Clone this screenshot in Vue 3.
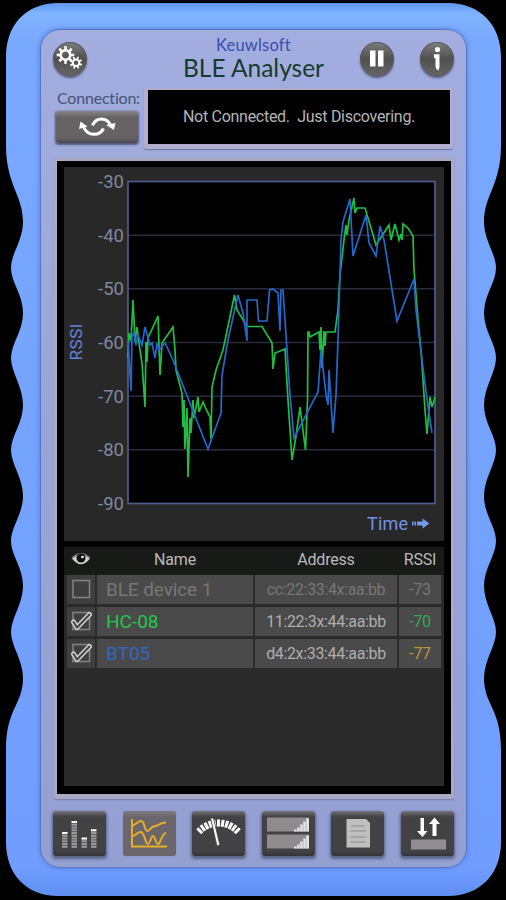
<script setup>
const ticks = [-30, -40, -50, -60, -70, -80, -90]
const tickY = (v) => 181.5 + ((-30 - v) * 322) / 60

const green = '128,358 129,333 131,341 133,300 135,342 137,327 139,343 140,350 142,363 145,407 146,342 147,362 148,338 158,316 160,375 161,360 162,343 173,327 175,350 176,370 182,393 183,427 184,400 185,449 187,408 188,477 190,418 191,433 193,400 194,418 198,397 199,412 203,402 206,409 210,417 211,439 212,387 216,370 223,350 234.5,295 237,310 247,326.5 262,326.5 272,343 273,369 275,353 285,349 288,400 292,460 296,436 300,407 305.5,450 307.5,400 308,332 309,332 310,337 319,332 320,350 321,327 322,368 324,331 325,346 326,332 335,332 338,310 340,275 344,240 346,225 347,235 349,220 354,198 355,213 357,208 365,208 371,228 376,245 389,225 391,240 395,224 399,240 401,234 402,240 403,224 408,228 413,236 414,270 415,282 418,320 421,350 425,410 427,434 430,397 432,407 435,397'
const blue = '128,341 131,391 132,336 134,333 136,345 138,335 142,345 145,327 150,345 152,343 155,358 157,343 159,350 165,343 173,360 208,449 221,413 222,375 228,340 238,295 243,313 247,341 247,300 257,300 258.5,321 267,321 269.5,290 273,289 278,293 280,331 281,290 283,290 286,335 290,395 294,438 318,392 321,350 326,395 328,405 329,370 333,433 336,395 338,340 341,240 343,222 350,199 353,256 366,215 369,243 376,256 380,226 384,240 397,321 414,279 416,310 422,360 428,407 432,433'

const devices = [
  { name: 'BLE device 1', address: 'cc:22:33:4x:aa:bb', rssi: -73, on: false, tone: 'off' },
  { name: 'HC-08', address: '11:22:3x:44:aa:bb', rssi: -70, on: true, tone: 'green' },
  { name: 'BT05', address: 'd4:2x:33:44:aa:bb', rssi: -77, on: true, tone: 'blue' },
]
const bars = [
  { x: 9, n: 6 },
  { x: 18.5, n: 10 },
  { x: 28.5, n: 4 },
  { x: 38, n: 7 },
]
const gaugeAngles = [-45, -36, -27, -18, -9, 0, 9, 18, 27, 36, 45]
const teeth = [0, 45, 90, 135, 180, 225, 270, 315]
</script>

<template>
  <main class="device">
    <svg class="shell" width="506" height="900" viewBox="0 0 506 900">
      <defs>
        <linearGradient id="body" x1="0" y1="0" x2="0" y2="1">
          <stop offset="0" stop-color="#5c96ee" />
          <stop offset=".012" stop-color="#7fb4ff" />
          <stop offset=".04" stop-color="#79a9ff" />
          <stop offset=".97" stop-color="#709dff" />
          <stop offset="1" stop-color="#5f8ff2" />
        </linearGradient>
      </defs>
      <path
        fill="url(#body)"
        d="M58 3H448C480 3 501 25 501 57V145C501 185 484 195 484 222C484 240 496 254 496 268C496 282 484 295 484 313C484 331 496 344 496 358C496 372 484 387 484 405C484 423 496 436 496 450C496 464 484 478 484 496C484 514 496 527 496 541C496 555 484 568 484 586C484 604 496 618 496 632C496 646 484 660 484 678C484 705 501 708 501 750V842C501 874 480 896 448 896H58C26 896 6 874 6 842V750C6 708 23 705 23 678C23 660 11 646 11 632C11 618 23 604 23 586C23 568 11 555 11 541C11 527 23 514 23 496C23 478 11 464 11 450C11 436 23 423 23 405C23 387 11 372 11 358C11 344 23 331 23 313C23 295 11 282 11 268C11 254 23 240 23 222C23 195 6 185 6 145V57C6 25 26 3 58 3Z"
      />
    </svg>

    <section class="face">
      <header class="top">
        <button class="round" aria-label="Settings">
          <svg width="34" height="34" viewBox="0 0 34 34">
            <g transform="translate(12.5 13)">
              <circle r="4.800" fill="none" stroke="#fff" stroke-width="2.600" />
              <rect v-for="a in teeth" :key="a" x="-1.300" y="-8.800" width="2.600" height="3.600" fill="#fff" :transform="`rotate(${a})`" />
            </g>
            <g transform="translate(23 20.7)">
              <circle r="3.300" fill="none" stroke="#fff" stroke-width="2" />
              <rect v-for="a in teeth" :key="a" x="-.9" y="-6.200" width="1.800" height="2.800" fill="#fff" :transform="`rotate(${a + 20})`" />
            </g>
          </svg>
        </button>
        <h1 class="title"><span class="brand">Keuwlsoft</span><span class="product">BLE Analyser</span></h1>
        <div class="top-right">
          <button class="round" aria-label="Pause">
            <svg width="34" height="34" viewBox="0 0 34 34"><path d="M10 8.500h5.500v16H10zM18 8.500h5.500v16H18z" fill="#fff" /></svg>
          </button>
          <button class="round" aria-label="Information">
            <svg width="34" height="34" viewBox="0 0 34 34">
              <circle cx="17.500" cy="7.500" r="2.600" fill="#fff" />
              <path d="M14 14.200h3.500v9.300q0 2.500 1.500 3" fill="none" stroke="#fff" stroke-width="4" />
            </svg>
          </button>
        </div>
      </header>

      <section class="status">
        <div class="connect">
          <span class="connect-label">Connection:</span>
          <button class="connect-button" aria-label="Connect">
            <svg width="40" height="24" viewBox="0 0 40 24" fill="none" stroke="#fff" stroke-width="3">
              <path d="M15.500 10.500C19 2 30 1.500 34 11" />
              <path d="M26.500 13.500C23 21 11 22 6.500 12" />
              <path d="M29 10l9.500-2-1.500 7zM2 14l1.500-7.500 7 5z" fill="#fff" stroke="none" />
            </svg>
          </button>
        </div>
        <div class="display">Not Connected.&nbsp; Just Discovering.</div>
      </section>

      <section class="screen">
        <svg class="chart" width="380" height="374" viewBox="64 167 380 374">
          <rect x="128" y="181.500" width="307" height="322" fill="#000" />
          <path v-for="t in ticks.slice(1, -1)" :key="t" :d="`M128 ${tickY(t)}H435`" stroke="#292b3e" stroke-width="1.500" />
          <rect x="128" y="181.500" width="307" height="322" fill="none" stroke="#4e5d8e" stroke-width="1.700" />
          <text v-for="t in ticks" :key="t" class="tick" x="124" :y="tickY(t) + 6.500" text-anchor="end">{{ t }}</text>
          <polyline :points="green" fill="none" stroke="#20bd43" stroke-width="1.700" />
          <polyline :points="blue" fill="none" stroke="#2468c9" stroke-width="1.700" />
          <text class="axis" transform="translate(82 342) rotate(-90)" text-anchor="middle" textLength="37">RSSI</text>
          <text class="axis time" x="367" y="529.500" textLength="41">Time</text>
          <path d="M412 521.500h1.500v4H412zM414.500 521.500h1.500v4h-1.500zM417 521.500h5.500v-3l7 5-7 5v-3H417z" fill="#7199ed" />
        </svg>

        <div class="table">
          <div class="row head">
            <span class="eye">
              <svg width="20" height="16" viewBox="0 0 20 16">
                <path d="M1 7.500Q10 0 19 7.500Q10 19 1 7.500Z" fill="#d0d0d0" />
                <path d="M1 7Q10-1.500 19 7" fill="none" stroke="#777" stroke-width="1.500" />
                <circle cx="10" cy="7" r="4.500" fill="#111" />
                <circle cx="11.500" cy="6" r="1.300" fill="#fff" />
              </svg>
            </span>
            <span>Name</span><span>Address</span><span>RSSI</span>
          </div>
          <div v-for="d in devices" :key="d.name" class="row entry" :class="d.tone">
            <span class="cell check">
              <svg width="22" height="22" viewBox="0 0 22 22" fill="none">
                <rect x="3" y="2.500" width="16.500" height="17" stroke="#858585" stroke-width="1.500" />
                <template v-if="d.on">
                  <path d="M3.500 12L7 17.500L19.500 4.500" stroke="#d2d2d2" stroke-width="5" stroke-linecap="round" stroke-linejoin="round" />
                  <path d="M3.500 12L7 17.500L19.500 4.500" stroke="#444" stroke-width="2" stroke-linecap="round" stroke-linejoin="round" />
                </template>
              </svg>
            </span>
            <span class="cell name">{{ d.name }}</span>
            <span class="cell address">{{ d.address }}</span>
            <span class="cell rssi">{{ d.rssi }}</span>
          </div>
        </div>
      </section>

      <nav class="tools">
        <button class="tool" aria-label="Bars">
          <svg width="53" height="45" viewBox="0 0 53 45">
            <g v-for="b in bars" :key="b.x">
              <rect v-for="i in b.n" :key="i" :x="b.x" :y="37.500 - i * 2.750" width="5.500" height="2.100" :fill="i === b.n ? '#fff' : '#999'" />
            </g>
          </svg>
        </button>
        <button class="tool selected" aria-label="Graph">
          <svg width="53" height="45" viewBox="0 0 53 45" fill="none" stroke="#e5ae26" stroke-width="2">
            <path d="M9 8v27.500h35M10 14.500c3-1 5-4.500 8-4.500 4 0 3 10 6.500 10 2 0 3-3.500 6-4.500 5 0 6-4 12.500-4M10 25c4-1 5-5 8-4 4 1 4 12 7 12 2 0 3-8 5-8s3 8 5 8c3 0 3-10 8-11" />
          </svg>
        </button>
        <button class="tool" aria-label="Meter">
          <svg width="53" height="45" viewBox="0 0 53 45" stroke="#fff">
            <path v-for="a in gaugeAngles" :key="a" d="M26.500 8.500v7" stroke-width="3" :transform="`rotate(${a} 26.500 38.500)`" />
            <path d="M18.500 7L21.500 7L27.800 34L25 35Z" fill="#fff" stroke="#414145" stroke-width=".8" />
          </svg>
        </button>
        <button class="tool" aria-label="Signal list">
          <svg width="53" height="45" viewBox="0 0 53 45">
            <path d="M5 6.500h42v14H5zM5 23.500h42v14H5z" fill="#8f8b8f" />
            <path d="M32 20.500v-2h3v-2h3v-3h3v-3h3V7.500h3v13zM32 37.500v-2h3v-2h3v-3h3v-3h3v-3h3v13z" fill="#e4e4e4" />
            <path d="M35 16.500v4m3-6v6m3-9v9m3-12v12M35 33.500v4m3-6v6m3-9v9m3-12v12" stroke="#999" stroke-width=".6" />
          </svg>
        </button>
        <button class="tool" aria-label="Log">
          <svg width="53" height="45" viewBox="0 0 53 45">
            <path d="M15.500 8H35l4 4v24.500H15.500z" fill="#bfbfbf" />
            <path d="M19.500 15h14m-14 5h15m-15 6h15m-15 5h15" stroke="#8b8b8b" stroke-width="1.200" />
          </svg>
        </button>
        <button class="tool" aria-label="Transfer">
          <svg width="53" height="45" viewBox="0 0 53 45">
            <path d="M10 28.500h35v10H10z" fill="#918d92" />
            <path d="M19.500 7h3.500v13h3.500l-5 6-5.500-6h3.500zM31.500 25V13H28l5.500-6.500L39 13h-3.500v12z" fill="#fff" />
          </svg>
        </button>
      </nav>
    </section>
  </main>
</template>

<style>
body {
  margin: 0;
  background: #000;
}
</style>

<style scoped>
.device {
  position: relative;
  box-sizing: border-box;
  width: 506px;
  height: 900px;
  padding: 29px 39px 32px 40px;
  overflow: hidden;
  background: #000;
  font-family: Roboto, sans-serif;
}
.shell {
  position: absolute;
  top: 0;
  left: 0;
}
.face {
  position: relative;
  display: flex;
  flex-direction: column;
  box-sizing: border-box;
  height: 839px;
  padding: 1px 13px 11px;
  border: 1px solid #5877c2;
  border-radius: 20px;
  background: linear-gradient(#a3addf, #99a5da 45%, #949fd2);
  box-shadow: 0 0 5px 0 #4e7cdd;
}
button {
  display: flex;
  align-items: center;
  justify-content: center;
  padding: 0;
  border: 0;
}
.top {
  display: flex;
  justify-content: space-between;
  height: 57px;
  margin: 0 -1px;
}
.round {
  width: 34px;
  height: 34px;
  margin-top: 11px;
  border-radius: 50%;
  background: linear-gradient(#7d7d7d, #505050 50%, #666);
  box-shadow: 0 0 0 1px #5c5c62 inset, 0 2px 2px #565d79;
}
.title {
  display: flex;
  flex-direction: column;
  align-items: center;
  width: 160px;
  margin: 4px 0 0 60px;
  font-family: Lato, sans-serif;
  font-weight: 400;
}
.brand {
  color: #394eb0;
  font-size: 16.500px;
  line-height: 20px;
  letter-spacing: 0.2px;
}
.product {
  color: #163c2c;
  font-size: 24.500px;
  line-height: 25px;
  white-space: nowrap;
}
.top-right {
  display: flex;
  gap: 26px;
}
.status {
  display: flex;
  justify-content: space-between;
  height: 62px;
  margin-bottom: 7px;
}
.connect {
  display: flex;
  flex-direction: column;
  width: 86px;
  padding-left: 2px;
}
.connect-label {
  height: 23px;
  padding-left: 1px;
  color: #475375;
  font: 16px/19px Lato, sans-serif;
  letter-spacing: -0.2px;
}
.connect-button {
  width: 82px;
  height: 32px;
  border-radius: 3px;
  background: linear-gradient(#898686, #666264 20%, #666264 85%, #464750);
  box-shadow: 0 1px 2px 1px #545b76;
}
.display {
  display: flex;
  align-items: center;
  justify-content: center;
  box-sizing: border-box;
  width: 309px;
  height: 61px;
  border: solid #b3add0;
  border-width: 2px 3px 5px 4px;
  border-radius: 2px;
  background: #000;
  box-shadow: 0 1px 1px #70779e;
  color: #b5b5b5;
  font-size: 16px;
  letter-spacing: -0.280px;
}
.screen {
  display: flex;
  flex-direction: column;
  gap: 6px;
  box-sizing: border-box;
  width: 400px;
  height: 643px;
  padding: 6px 7px 8px;
  border: solid #aaa9c5;
  border-width: 4px 3px 5px;
  border-radius: 2px;
  background: #000;
  box-shadow: 0 1px 1px #777fa7;
}
.chart {
  display: block;
  flex: none;
  background: #282828;
}
.tick {
  fill: #7e89a0;
  font-size: 18.500px;
}
.axis {
  fill: #6780dc;
  font-size: 17px;
}
.time {
  fill: #7291e5;
  font-size: 18px;
}
.table {
  flex: 1;
  background: #2a2a2a;
}
.row {
  display: grid;
  grid-template-columns: 28px 156px 142px 42px;
  column-gap: 2px;
  align-items: stretch;
  padding: 0 2px 0 3px;
}
.head {
  height: 28px;
  background: #181a18;
  color: #b9b9b9;
  font-size: 16px;
  line-height: 25px;
  letter-spacing: -0.2px;
  text-align: center;
}
.head .eye {
  display: flex;
  align-items: center;
  justify-content: center;
  padding-bottom: 3px;
}
.entry {
  height: 29px;
  margin-bottom: 3px;
}
.cell {
  display: flex;
  align-items: center;
  background: #4a4a4a;
  color: #aeaeae;
  box-shadow: 0 0 1px #3a3a3a;
}
.check {
  justify-content: center;
  background: #3f3f3f;
}
.name {
  padding-left: 9px;
  font-size: 19px;
}
.address,
.rssi {
  justify-content: center;
  font-size: 16px;
  letter-spacing: -0.350px;
}
.off .cell {
  color: #777;
}
.off .name {
  letter-spacing: -0.1px;
}
.green .name {
  color: #25c64c;
}
.green .rssi {
  color: #38a854;
}
.blue .name {
  color: #3268c0;
}
.blue .rssi {
  color: #b79938;
}
.tools {
  display: flex;
  justify-content: space-between;
  margin: 12px -1px 0;
}
.tool {
  width: 53px;
  height: 45px;
  border-radius: 3px;
  background: linear-gradient(#777376, #424144 13%, #424144 90%, #343438);
  box-shadow: 0 2px 3px 1px #5c6484;
}
.tool.selected {
  background: linear-gradient(#817c82, #6b666c 13%, #6b666c);
  box-shadow: 0 0 1px #757795;
}
</style>
